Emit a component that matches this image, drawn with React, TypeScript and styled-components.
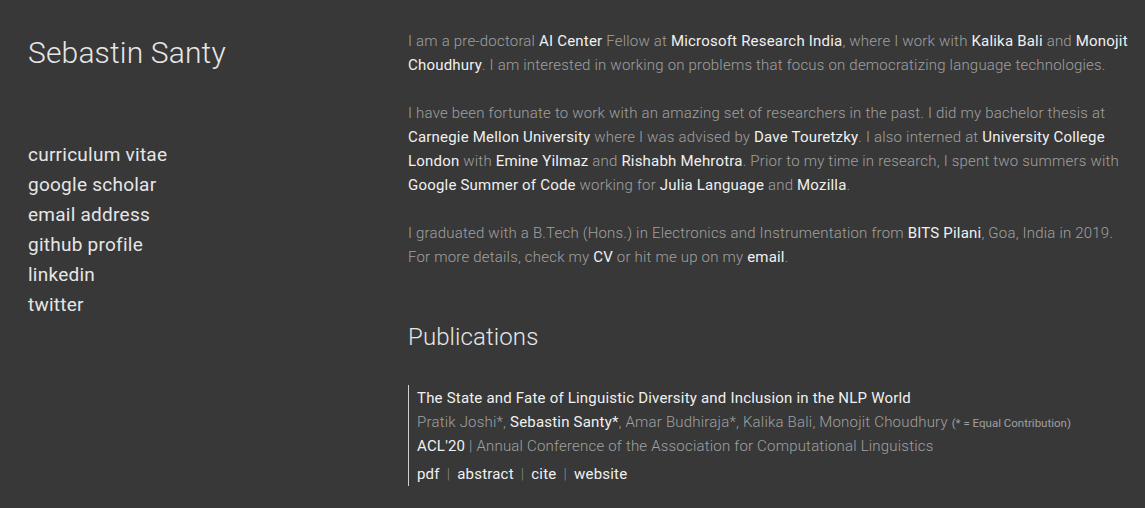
import React from "react";
import styled, { createGlobalStyle } from "styled-components";

const Global = createGlobalStyle`
  html, body { margin: 0; padding: 0; background: #383838; }
  body { font-family: Roboto, "Liberation Sans", sans-serif; color: #999; }
  a { text-decoration: none; }
`;

const Page = styled.div`
  display: grid;
  grid-template-columns: 380px 728px;
  padding: 0 0 0 28px;
  min-height: 508px;
  box-sizing: border-box;
`;

const Sidebar = styled.aside`
  display: flex;
  flex-direction: column;
  padding-top: 33px;
`;

const Name = styled.h1`
  margin: 0;
  font-size: 30px;
  font-weight: 300;
  color: #e6e6e6;
  letter-spacing: 0.15px;
  line-height: 40px;
`;

const LinkList = styled.nav`
  display: flex;
  flex-direction: column;
  margin-top: 67px;
`;

const SideLink = styled.a`
  font-size: 19px;
  line-height: 30px;
  color: #e6e6e6;
  font-weight: 400;
  letter-spacing: 0.25px;
`;

const Main = styled.main`
  padding-top: 29px;
  font-size: 15px;
  line-height: 24px;
  letter-spacing: 0.2px;
  font-weight: 300;
`;

const Para = styled.p`
  margin: 0 0 24px 0;
  color: #a0a0a0;
`;

const Hl = styled.a`
  color: #f0f0f0;
  font-weight: 400;
`;

const Heading = styled.h2`
  margin: 52px 0 0 0;
  font-size: 24px;
  font-weight: 300;
  color: #e6e6e6;
  line-height: 32px;
  letter-spacing: 0.1px;
`;

const Pub = styled.div`
  margin-top: 32px;
  border-left: 1px solid #d0d0d0;
  padding: 1px 0 0 8px;
  display: flex;
  flex-direction: column;
`;

const PubLine = styled.div<{ $light?: boolean }>`
  color: ${(p) => (p.$light ? "#f0f0f0" : "#a0a0a0")};
  font-weight: ${(p) => (p.$light ? 400 : 300)};
  line-height: 24px;
`;

const Small = styled.span`
  font-size: 11.5px;
  line-height: 1;
  color: #a0a0a0;
  font-weight: 400;
  letter-spacing: 0;
`;

const Actions = styled.div`
  display: flex;
  align-items: center;
  gap: 7px;
  margin-top: 4px;
  line-height: 24px;
`;

const Sep = styled.span`
  color: #8a8a8a;
  font-weight: 300;
`;

export default function App() {
  return (
    <>
      <Global />
      <Page>
        <Sidebar>
          <Name>Sebastin Santy</Name>
          <LinkList>
            <SideLink>curriculum vitae</SideLink>
            <SideLink>google scholar</SideLink>
            <SideLink>email address</SideLink>
            <SideLink>github profile</SideLink>
            <SideLink>linkedin</SideLink>
            <SideLink>twitter</SideLink>
          </LinkList>
        </Sidebar>
        <Main>
          <Para>
            I am a pre-doctoral <Hl>AI Center</Hl> Fellow at <Hl>Microsoft Research India</Hl>, where I work with{" "}
            <Hl>Kalika Bali</Hl> and <Hl>Monojit Choudhury</Hl>. I am interested in working on problems that focus on
            democratizing language technologies.
          </Para>
          <Para>
            I have been fortunate to work with an amazing set of researchers in the past. I did my bachelor thesis at{" "}
            <Hl>Carnegie Mellon University</Hl> where I was advised by <Hl>Dave Touretzky</Hl>. I also interned at{" "}
            <Hl>University College London</Hl> with <Hl>Emine Yilmaz</Hl> and <Hl>Rishabh Mehrotra</Hl>. Prior to my
            time in research, I spent two summers with <Hl>Google Summer of Code</Hl> working for{" "}
            <Hl>Julia Language</Hl> and <Hl>Mozilla</Hl>.
          </Para>
          <Para>
            I graduated with a B.Tech (Hons.) in Electronics and Instrumentation from <Hl>BITS Pilani</Hl>, Goa, India
            in 2019. For more details, check my <Hl>CV</Hl> or hit me up on my <Hl>email</Hl>.
          </Para>
          <Heading>Publications</Heading>
          <Pub>
            <PubLine $light>The State and Fate of Linguistic Diversity and Inclusion in the NLP World</PubLine>
            <PubLine>
              Pratik Joshi*, <Hl>Sebastin Santy*</Hl>, Amar Budhiraja*, Kalika Bali, Monojit Choudhury{" "}
              <Small>(* = Equal Contribution)</Small>
            </PubLine>
            <PubLine>
              <Hl>ACL'20</Hl> | Annual Conference of the Association for Computational Linguistics
            </PubLine>
            <Actions>
              <Hl>pdf</Hl>
              <Sep>|</Sep>
              <Hl>abstract</Hl>
              <Sep>|</Sep>
              <Hl>cite</Hl>
              <Sep>|</Sep>
              <Hl>website</Hl>
            </Actions>
          </Pub>
        </Main>
      </Page>
    </>
  );
}
